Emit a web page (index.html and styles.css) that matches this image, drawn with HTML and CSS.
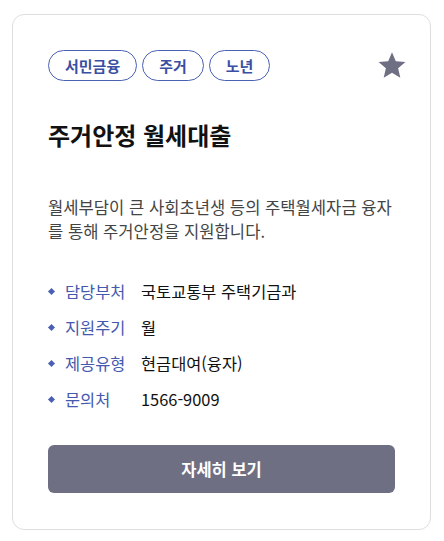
FILE: index.html
```html
<!DOCTYPE html>
<html lang="ko">
<head>
<meta charset="utf-8">
<link rel="stylesheet" href="styles.css">
</head>
<body>
<div class="card">
  <div class="card-head">
    <div class="tags">
      <span class="tag">서민금융</span>
      <span class="tag">주거</span>
      <span class="tag">노년</span>
    </div>
    <svg class="star" viewBox="0 0 24 24" width="30" height="30" aria-hidden="true">
      <path d="M12 1.8l3.05 7.1 7.7.7-5.85 5.08 1.75 7.52L12 18.2l-6.65 4l1.75-7.52L1.25 9.6l7.7-.7z" fill="#6f6f84"/>
    </svg>
  </div>
  <h2 class="title">주거안정 월세대출</h2>
  <p class="desc">월세부담이 큰 사회초년생 등의 주택월세자금 융자를 통해 주거안정을 지원합니다.</p>
  <ul class="info">
    <li><span class="label">담당부처</span><span class="value">국토교통부 주택기금과</span></li>
    <li><span class="label">지원주기</span><span class="value">월</span></li>
    <li><span class="label">제공유형</span><span class="value">현금대여(융자)</span></li>
    <li><span class="label">문의처</span><span class="value">1566-9009</span></li>
  </ul>
  <button class="btn">자세히 보기</button>
</div>
</body>
</html>
```

FILE: styles.css
```css
* { box-sizing: border-box; }
html, body { margin: 0; padding: 0; background: #fff; }
body {
  font-family: "Noto Sans CJK KR", "Noto Sans", sans-serif;
  color: #111;
}
.card {
  margin: 14px 13px 0 12px;
  width: 419px;
  height: 516px;
  border: 1px solid #dedede;
  border-radius: 12px;
  padding: 35px 35px 36px 35px;
  display: flex;
  flex-direction: column;
}
.card-head {
  display: flex;
  justify-content: space-between;
  align-items: flex-start;
}
.tags { display: flex; gap: 5px; }
.tag {
  height: 31px;
  border: 1px solid #4a61b3;
  border-radius: 16px;
  padding: 0 16px;
  font-size: 15px;
  font-weight: 700;
  color: #3a4fa3;
  display: flex;
  align-items: center;
  line-height: 1;
}
.star { margin-right: -12px; margin-top: 0px; }
.title {
  margin: 38px 0 0 0;
  font-size: 24px;
  font-weight: 700;
  line-height: 32px;
  color: #111;
}
.desc {
  margin: 44px 0 0 0;
  font-size: 16.6px;
  line-height: 24px;
  color: #444;
}
.info {
  list-style: none;
  margin: 36px 0 0 0;
  padding: 0;
  display: flex;
  flex-direction: column;
  gap: 12px;
}
.info li {
  display: flex;
  align-items: center;
  height: 24px;
  font-size: 16.4px;
}
.info li::before {
  content: "";
  width: 5px;
  height: 5px;
  background: #4a61b3;
  transform: rotate(45deg);
  margin: 0 11px 0 1px;
  flex: none;
}
.label { color: #4458ad; width: 76px; flex: none; }
.value { color: #111; }
.btn {
  margin-top: auto;
  height: 48px;
  border: none;
  border-radius: 6px;
  background: #6f6f84;
  color: #fff;
  font-family: inherit;
  font-size: 16.5px;
  font-weight: 700;
}
```
